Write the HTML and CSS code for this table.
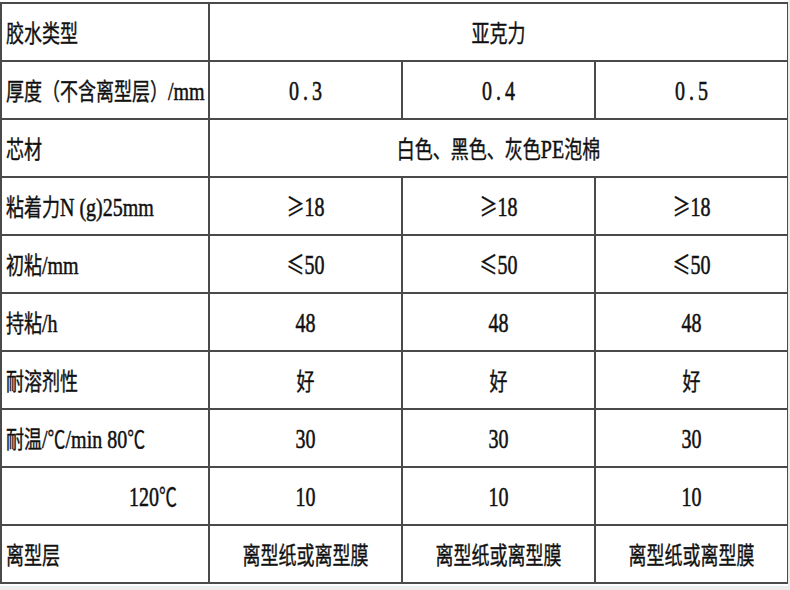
FILE: index.html
```html
<!DOCTYPE html>
<html lang="zh">
<head>
<meta charset="utf-8">
<link rel="stylesheet" href="styles.css">
</head>
<body>
<div class="sheet">
<table class="spec">
  <colgroup>
    <col class="c1"><col class="c2"><col class="c3"><col class="c4">
  </colgroup>
  <tr><td class="lbl"><span class="t">胶水类型</span></td><td colspan="3"><span class="t">亚克力</span></td></tr>
  <tr><td class="lbl"><span class="t">厚度（不含离型层）<span class="lat">/mm</span></span></td><td><span class="t lat num">0.3</span></td><td><span class="t lat num">0.4</span></td><td><span class="t lat num">0.5</span></td></tr>
  <tr><td class="lbl"><span class="t">芯材</span></td><td colspan="3"><span class="t">白色、黑色、灰色<span class="lat">PE</span>泡棉</span></td></tr>
  <tr><td class="lbl"><span class="t">粘着力<span class="lat">N (g)25mm</span></span></td><td><span class="t lat"><span class="sym">≥</span>18</span></td><td><span class="t lat"><span class="sym">≥</span>18</span></td><td><span class="t lat"><span class="sym">≥</span>18</span></td></tr>
  <tr><td class="lbl"><span class="t">初粘<span class="lat">/mm</span></span></td><td><span class="t lat"><span class="sym">≤</span>50</span></td><td><span class="t lat"><span class="sym">≤</span>50</span></td><td><span class="t lat"><span class="sym">≤</span>50</span></td></tr>
  <tr><td class="lbl"><span class="t">持粘<span class="lat">/h</span></span></td><td><span class="t lat">48</span></td><td><span class="t lat">48</span></td><td><span class="t lat">48</span></td></tr>
  <tr><td class="lbl"><span class="t">耐溶剂性</span></td><td><span class="t">好</span></td><td><span class="t">好</span></td><td><span class="t">好</span></td></tr>
  <tr><td class="lbl"><span class="t">耐温<span class="lat">/<span class="sym">℃</span>/min 80<span class="sym">℃</span></span></span></td><td><span class="t lat">30</span></td><td><span class="t lat">30</span></td><td><span class="t lat">30</span></td></tr>
  <tr><td class="lbl"><span class="t lat indent">120<span class="sym">℃</span></span></td><td><span class="t lat">10</span></td><td><span class="t lat">10</span></td><td><span class="t lat">10</span></td></tr>
  <tr><td class="lbl"><span class="t">离型层</span></td><td><span class="t">离型纸或离型膜</span></td><td><span class="t">离型纸或离型膜</span></td><td><span class="t">离型纸或离型膜</span></td></tr>
</table>
</div>
</body>
</html>
```
FILE: styles.css
```css
html, body {
  margin: 0;
  padding: 0;
  background: #ececec;
}
.sheet {
  width: 788px;
  height: 586px;
  background: #ffffff;
  padding-top: 2px;
  box-sizing: border-box;
  overflow: hidden;
}
.spec {
  border-collapse: collapse;
  table-layout: fixed;
  width: 787px;
  font-family: "Noto Sans CJK SC", sans-serif;
  font-size: 18px;
  color: #111;
  -webkit-text-stroke: 0.3px #111;
}
.c1 { width: 208px; }
.c2 { width: 193px; }
.c3 { width: 193px; }
.c4 { width: 193px; }
.spec td {
  border: 2px solid #4a4a4a;
  height: 56px;
  padding: 0;
  text-align: center;
  vertical-align: middle;
  white-space: nowrap;
}
.spec td.lbl {
  text-align: left;
  padding-left: 4px;
}
.t {
  display: inline-block;
  transform: scaleY(1.3);
  transform-origin: center 60%;
  line-height: 20px;
}
.lat {
  font-family: "Liberation Serif", serif;
  font-size: 20px;
  -webkit-text-stroke: 0.4px #111;
}
.t.lat {
  transform: scaleY(1.4);
}
.sym {
  font-family: "Noto Sans CJK SC", sans-serif;
  font-size: 18px;
  -webkit-text-stroke: 0.2px #111;
}
.num {
  letter-spacing: 4px;
  padding-left: 4px;
}
.indent {
  padding-left: 123px;
}
```
